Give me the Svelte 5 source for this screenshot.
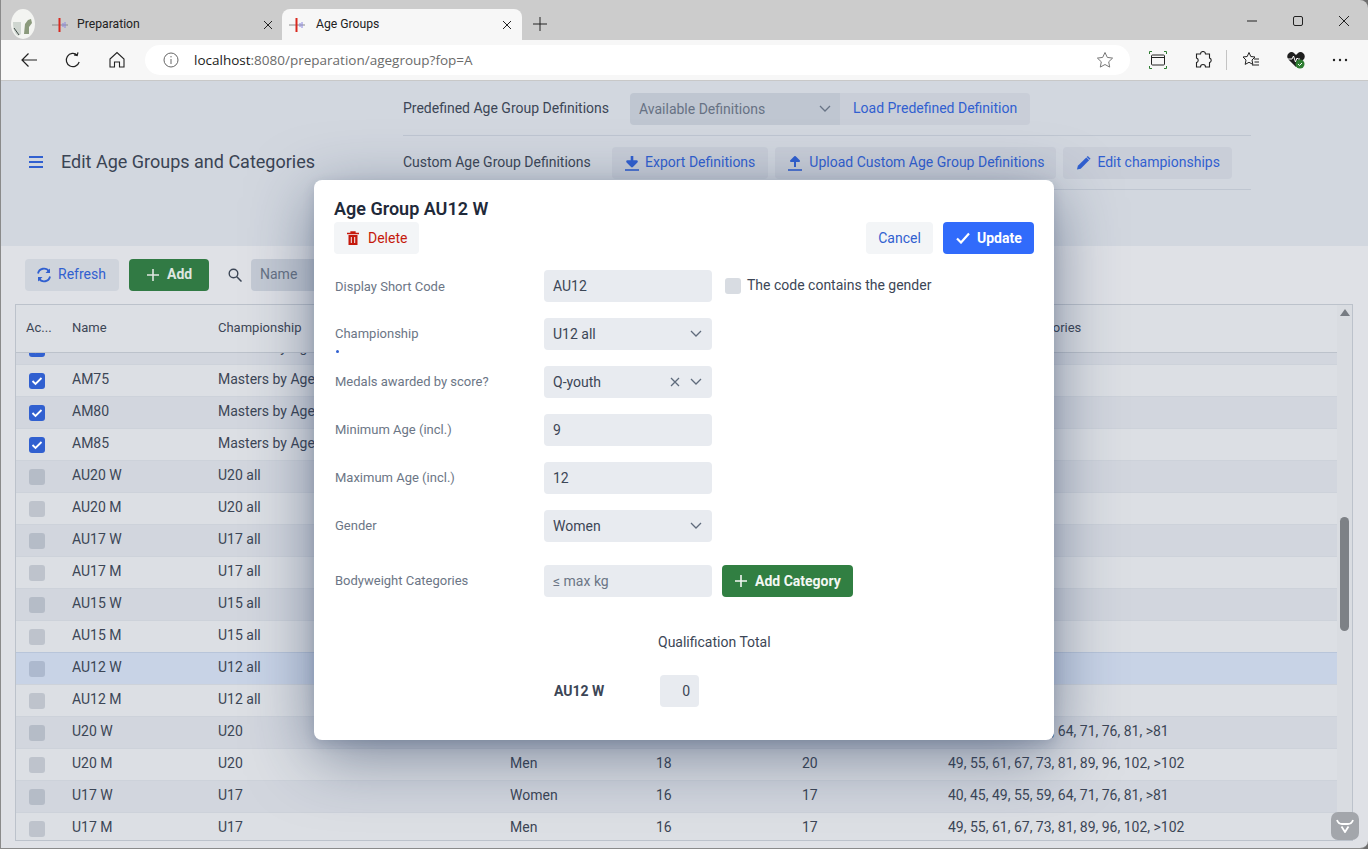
<script>
  const rows = [
    { name: 'AM70', champ: 'Masters by Age Group', gender: 'Men', min: 70, max: 74, cats: '', on: true },
    { name: 'AM75', champ: 'Masters by Age Group', gender: 'Men', min: 75, max: 79, cats: '', on: true },
    { name: 'AM80', champ: 'Masters by Age Group', gender: 'Men', min: 80, max: 84, cats: '', on: true },
    { name: 'AM85', champ: 'Masters by Age Group', gender: 'Men', min: 85, max: 89, cats: '', on: true },
    { name: 'AU20 W', champ: 'U20 all', gender: 'Women', min: 18, max: 20, cats: '' },
    { name: 'AU20 M', champ: 'U20 all', gender: 'Men', min: 18, max: 20, cats: '' },
    { name: 'AU17 W', champ: 'U17 all', gender: 'Women', min: 16, max: 17, cats: '' },
    { name: 'AU17 M', champ: 'U17 all', gender: 'Men', min: 16, max: 17, cats: '' },
    { name: 'AU15 W', champ: 'U15 all', gender: 'Women', min: 13, max: 15, cats: '' },
    { name: 'AU15 M', champ: 'U15 all', gender: 'Men', min: 13, max: 15, cats: '' },
    { name: 'AU12 W', champ: 'U12 all', gender: 'Women', min: 9, max: 12, cats: '', selected: true },
    { name: 'AU12 M', champ: 'U12 all', gender: 'Men', min: 9, max: 12, cats: '' },
    { name: 'U20 W', champ: 'U20', gender: 'Women', min: 18, max: 20, cats: '40, 45, 49, 55, 59, 64, 71, 76, 81, >81' },
    { name: 'U20 M', champ: 'U20', gender: 'Men', min: 18, max: 20, cats: '49, 55, 61, 67, 73, 81, 89, 96, 102, >102' },
    { name: 'U17 W', champ: 'U17', gender: 'Women', min: 16, max: 17, cats: '40, 45, 49, 55, 59, 64, 71, 76, 81, >81' },
    { name: 'U17 M', champ: 'U17', gender: 'Men', min: 16, max: 17, cats: '49, 55, 61, 67, 73, 81, 89, 96, 102, >102' },
  ];

  const fields = [
    { label: 'Championship', value: 'U12 all', select: true, dot: true },
    { label: 'Medals awarded by score?', value: 'Q-youth', select: true, clear: true },
    { label: 'Minimum Age (incl.)', value: '9' },
    { label: 'Maximum Age (incl.)', value: '12' },
    { label: 'Gender', value: 'Women', select: true },
  ];
</script>

<div class="window">
  <div class="tabstrip">
    <svg class="avatar" viewBox="0 0 24 32" width="24" height="32">
      <ellipse cx="12" cy="16" rx="12" ry="15" fill="#f3f4f1" />
      <path d="M2 14c0 6 1 11 5 14l3-2V14z" fill="#cfd6d0" />
      <path d="M13 26l1-10 3-4 3-1 1 4-3 4v7z" fill="#8b9a7c" />
      <path d="M3 20l5 7" stroke="#3f4a46" stroke-width="1" fill="none" />
    </svg>
    <div class="tab">
      <svg class="favicon" viewBox="0 0 16 16" width="16" height="16">
        <path d="M0 8h16" stroke="#8a8a8a" />
        <path d="M11 6v4M13 5v6" stroke="#8a86e0" />
        <path d="M7.5 1v14" stroke="#d9281e" stroke-width="2" />
      </svg>
      <span class="tab-title">Preparation</span>
      <svg class="tab-close" viewBox="0 0 10 10" width="10" height="10"><path d="M1 1l8 8M9 1l-8 8" stroke="#222" fill="none" /></svg>
    </div>
    <div class="tab active">
      <svg class="favicon" viewBox="0 0 16 16" width="16" height="16">
        <path d="M0 8h16" stroke="#8a8a8a" />
        <path d="M11 6v4M13 5v6" stroke="#8a86e0" />
        <path d="M7.5 1v14" stroke="#d9281e" stroke-width="2" />
      </svg>
      <span class="tab-title">Age Groups</span>
      <svg class="tab-close" viewBox="0 0 10 10" width="10" height="10"><path d="M1 1l8 8M9 1l-8 8" stroke="#222" fill="none" /></svg>
    </div>
    <svg class="newtab" viewBox="0 0 14 14" width="14" height="14"><path d="M7 0v14M0 7h14" stroke="#222" fill="none" /></svg>
    <div class="winctl">
      <svg viewBox="0 0 10 10" width="10" height="10"><path d="M0 5h10" stroke="#222" /></svg>
      <svg viewBox="0 0 10 10" width="10" height="10"><rect x=".5" y=".5" width="9" height="9" rx="1.5" stroke="#222" fill="none" /></svg>
      <svg viewBox="0 0 10 10" width="10" height="10"><path d="M0 0l10 10M10 0L0 10" stroke="#222" fill="none" /></svg>
    </div>
  </div>

  <div class="toolbar">
    <svg class="tool-first" viewBox="0 0 18 18" width="18" height="18"><path d="M17 9H2M8.5 2.5L2 9l6.5 6.5" stroke="#222" stroke-width="1.2" fill="none" /></svg>
    <svg viewBox="0 0 18 18" width="18" height="18"><path d="M15.5 9.5A6.6 6.6 0 1 1 12 3.2M12 .5v3.2H8.8" stroke="#222" stroke-width="1.2" fill="none" transform="rotate(14 9 9)" /></svg>
    <svg viewBox="0 0 18 18" width="18" height="18"><path d="M2 8l7-6.5L16 8v8h-4.500v-5h-5v5H2z" stroke="#222" stroke-width="1.1" fill="none" /></svg>
    <div class="address">
      <svg viewBox="0 0 16 16" width="16" height="16"><circle cx="8" cy="8" r="7" stroke="#666" fill="none" /><path d="M8 7v5M8 4v1.4" stroke="#666" fill="none" /></svg>
      <span class="url"><b>localhost</b>:8080/preparation/agegroup?fop=A</span>
      <svg class="star" viewBox="0 0 18 18" width="18" height="18"><path d="M9 1.5l2.3 4.9 5.3.7-3.9 3.7 1 5.3L9 13.5l-4.7 2.6 1-5.3-3.9-3.7 5.3-.7z" stroke="#777" fill="none" /></svg>
    </div>
    <div class="tool-icons">
      <svg viewBox="0 0 18 18" width="18" height="18">
        <rect x="2.5" y="4" width="13" height="10" rx="1" stroke="#222" fill="none" /><path d="M2.5 6.5h13" stroke="#222" />
        <path d="M.5 3V.5H3M15 .5h2.5V3M.5 15v2.5H3M15 17.5h2.5V15" stroke="#2e7d32" fill="none" />
      </svg>
      <svg viewBox="0 0 18 18" width="18" height="18"><path d="M6.5 3a2.5 2.5 0 0 1 5 0h4v4a2.4 2.4 0 0 1 0 4.6V16h-4a2.5 2.5 0 0 0-5 0h-4v-4.4a2.4 2.4 0 0 0 0-4.6V3z" stroke="#222" stroke-width="1.1" fill="none" /></svg>
      <span class="divider"></span>
      <svg viewBox="0 0 18 18" width="18" height="18"><path d="M7 1.5l1.8 4 4.2.5-3 3 .8 4.4L7 11.300l-3.800 2.100.8-4.400-3-3 4.200-.5zM12 8h5M12.500 11h4.500M10 14h7" stroke="#222" fill="none" /></svg>
      <svg class="heart" viewBox="0 0 20 20" width="20" height="20">
        <path d="M10 17L2.500 9.500a4.200 4.200 0 0 1 0-6 4.300 4.300 0 0 1 6 0L10 5l1.500-1.500a4.300 4.300 0 0 1 6 0 4.200 4.200 0 0 1 0 6z" fill="#1e1e1e" />
        <path d="M1 9h5l1.500-3 2 6L11 8l1 1h2" stroke="#fff" fill="none" />
        <circle cx="14" cy="14" r="4.500" fill="#2e7d32" /><path d="M12 14l1.500 1.500 2.500-2.500" stroke="#fff" fill="none" />
      </svg>
      <svg class="dots" viewBox="0 0 16 4" width="16" height="4"><circle cx="2" cy="2" r="1.200" fill="#222" /><circle cx="8" cy="2" r="1.200" fill="#222" /><circle cx="14" cy="2" r="1.200" fill="#222" /></svg>
    </div>
  </div>

  <div class="page">
    <header class="page-head">
      <div class="title-area">
        <svg viewBox="0 0 14 12" width="14" height="12"><path d="M0 1h14M0 6h14M0 11h14" stroke="#3160d0" stroke-width="2" /></svg>
        <h1>Edit Age Groups and Categories</h1>
      </div>
      <div class="head-forms">
        <div class="head-row">
          <span class="head-label first">Predefined Age Group Definitions</span>
          <div class="combo">Available Definitions
            <svg viewBox="0 0 12 8" width="12" height="8"><path d="M1 1l5 5 5-5" stroke="#687486" stroke-width="1.300" fill="none" /></svg>
          </div>
          <button class="btn load"><span class="lift">Load Predefined Definition</span></button>
        </div>
        <div class="head-row">
          <span class="head-label second">Custom Age Group Definitions</span>
          <button class="btn head-btn export">
            <svg viewBox="0 0 14 16" width="14" height="16"><path d="M7 1v8M2.500 6.500L7 11l4.500-4.500z" stroke="#3160d0" stroke-width="2.600" stroke-linejoin="round" fill="#3160d0" /><path d="M0 15h14" stroke="#3160d0" stroke-width="1.600" /></svg>
            <span class="lift">Export Definitions</span>
          </button>
          <button class="btn head-btn wide-gap">
            <svg viewBox="0 0 14 16" width="14" height="16"><path d="M7 12V5M3 6l4-4 4 4z" stroke="#3160d0" stroke-width="2" stroke-linejoin="round" fill="#3160d0" /><path d="M0 15h14" stroke="#3160d0" stroke-width="1.600" /></svg>
            <span class="lift">Upload Custom Age Group Definitions</span>
          </button>
          <button class="btn head-btn">
            <svg viewBox="0 0 16 16" width="15" height="16"><path d="M1 15l1-4L11 2l3 3-9 9z" fill="#3160d0" /><path d="M12 1l3 3" stroke="#3160d0" stroke-width="1.600" /></svg>
            <span class="lift">Edit championships</span>
          </button>
        </div>
      </div>
    </header>

    <section class="content">
      <div class="grid-toolbar">
        <button class="btn refresh">
          <svg viewBox="0 0 16 16" width="16" height="16"><path d="M2 6.500A6 6 0 0 1 13 4.500M14 9.500A6 6 0 0 1 3 11.500" stroke="#3160d0" stroke-width="1.800" fill="none" /><path d="M14 1.500V6h-4.500zM2 14.500V10h4.500z" fill="#3160d0" /></svg>
          <span class="lift">Refresh</span>
        </button>
        <button class="btn add">
          <svg viewBox="0 0 12 12" width="12" height="12"><path d="M6 0v12M0 6h12" stroke="currentColor" stroke-width="1.600" /></svg>
          <span class="lift">Add</span>
        </button>
        <svg class="search" viewBox="0 0 14 14" width="14" height="14"><circle cx="5.500" cy="5.500" r="4.300" stroke="#3c4656" stroke-width="1.400" fill="none" /><path d="M8.800 8.800L13.500 13.500" stroke="#3c4656" stroke-width="1.500" /></svg>
        <div class="filter"><span class="lift">Name</span></div>
      </div>

      <div class="table">
        <div class="table-main">
          <div class="row head">
            <span class="ac">Ac...</span>
            <span>Name</span>
            <span>Championship</span>
            <span>Gender</span>
            <span>Minimum Age</span>
            <span>Maximum Age</span>
            <span>Bodyweight Categories</span>
          </div>
          <div class="body">
            {#each rows as r, i}
              <div class="row" class:alt={i % 2 === 0} class:selected={r.selected}>
                <span class="ac"><span class="check" class:on={r.on}>
                  {#if r.on}
                    <svg viewBox="0 0 16 16" width="16" height="16"><path d="M3.500 8l3 3 6-6" stroke="#fff" stroke-width="1.800" fill="none" /></svg>
                  {/if}
                </span></span>
                <span>{r.name}</span>
                <span>{r.champ}</span>
                <span>{r.gender}</span>
                <span>{r.min}</span>
                <span>{r.max}</span>
                <span>{r.cats}</span>
              </div>
            {/each}
          </div>
        </div>
        <div class="scrollbar">
          <span class="arrow"></span>
          <span class="thumb"></span>
        </div>
      </div>
    </section>

    <div class="devtools">
      <svg viewBox="0 0 18 14" width="18" height="14"><path d="M1 1c1 3 3 4 5 4h6c2 0 4-1 5-4" stroke="#fff" stroke-width="1.800" fill="none" /><path d="M5.500 7.500L9 13l3.500-5.500" stroke="#fff" stroke-width="1.800" fill="none" /></svg>
    </div>
  </div>

  <div class="dialog">
    <h2>Age Group AU12 W</h2>
    <div class="dialog-actions">
      <button class="btn delete">
        <svg viewBox="0 0 12 14" width="12" height="14"><path d="M0 2.500h12M4 2.500V1h4v1.500" stroke="#c5190c" stroke-width="1.300" fill="none" /><path d="M1.500 4h9v10h-9z" fill="#c5190c" /><path d="M4.300 6v6M7.700 6v6" stroke="#f3f5f7" /></svg>
        Delete
      </button>
      <button class="btn cancel">Cancel</button>
      <button class="btn update">
        <svg viewBox="0 0 14 12" width="14" height="12"><path d="M1 6.500L5 10.500 13 1.500" stroke="#fff" stroke-width="2.200" fill="none" /></svg>
        Update
      </button>
    </div>

    <div class="form">
      <div class="form-row">
        <span class="form-label">Display Short Code</span>
        <div class="field">AU12</div>
        <span class="box"></span>
        <span class="box-label">The code contains the gender</span>
      </div>
      {#each fields as f}
        <div class="form-row">
          <span class="form-label raised">
            {f.label}
            {#if f.dot}<i class="dot"></i>{/if}
          </span>
          <div class="field">
            {f.value}
            <span class="field-icons">
              {#if f.clear}
                <svg viewBox="0 0 10 10" width="10" height="10"><path d="M1 1l8 8M9 1l-8 8" stroke="#5f6b7c" stroke-width="1.300" fill="none" /></svg>
              {/if}
              {#if f.select}
                <svg viewBox="0 0 12 8" width="12" height="8"><path d="M1 1l5 5 5-5" stroke="#5f6b7c" stroke-width="1.300" fill="none" /></svg>
              {/if}
            </span>
          </div>
        </div>
      {/each}
      <div class="form-row weight">
        <span class="form-label raised">Bodyweight Categories</span>
        <div class="field placeholder">≤ max kg</div>
        <button class="btn add-cat">
          <svg viewBox="0 0 12 12" width="12" height="12"><path d="M6 0v12M0 6h12" stroke="currentColor" stroke-width="1.600" /></svg>
          Add Category
        </button>
      </div>
    </div>

    <div class="qual">
      <div class="qual-head">Qualification Total</div>
      <div class="qual-row">
        <b>AU12 W</b>
        <span class="qual-value">0</span>
      </div>
    </div>
  </div>
</div>

<style>
  :global(body) {
    margin: 0;
    background: #6e6e6e;
  }

  .window {
    position: relative;
    width: 1368px;
    height: 849px;
    box-sizing: border-box;
    overflow: hidden;
    border-left: 1px solid #8a8a8a;
    border-bottom: 1px solid #8a8a8a;
    border-radius: 0 8px 8px 0;
    font-family: Roboto, sans-serif;
    font-size: 14px;
    color: #3c4656;
  }

  /* browser chrome */
  .tabstrip {
    height: 40px;
    background: #cccccc;
    display: flex;
    align-items: flex-end;
    font-family: Roboto, sans-serif;
    font-size: 12.2px;
    color: #222;
  }

  .avatar {
    margin: 0 0 0 10px;
    align-self: center;
    flex: none;
    position: relative;
    top: 4px;
  }

  .tab {
    width: 240px;
    height: 31px;
    box-sizing: border-box;
    display: flex;
    align-items: center;
    padding: 0 10px 0 9px;
    margin-left: 8px;
    flex: none;
  }

  .tab.active {
    background: #f7f7f7;
    border-radius: 8px 8px 0 0;
    padding-left: 7px;
    margin-left: -1px;
  }

  .tab-title {
    margin-left: 9px;
    flex: 1;
    position: relative;
    top: -1px;
  }

  .tab.active .tab-title {
    margin-left: 11px;
  }

  .newtab {
    margin: 0 0 9px 11px;
  }

  .winctl {
    margin-left: auto;
    display: flex;
    gap: 36px;
    padding-right: 19px;
    align-self: center;
    margin-top: 2px;
  }

  .toolbar {
    height: 41px;
    box-sizing: border-box;
    background: #f7f7f7;
    border-bottom: 1px solid #c8c8c8;
    display: flex;
    align-items: center;
    gap: 26px;
    padding-bottom: 1px;
  }

  .tool-first {
    margin-left: 19px;
  }

  .address {
    width: 985px;
    height: 30px;
    background: #fff;
    border-radius: 15px;
    display: flex;
    align-items: center;
    padding: 0 16px 0 18px;
    box-sizing: border-box;
    margin-left: -7px;
    flex: none;
  }

  .url {
    margin-left: 15px;
    font-family: "Open Sans", sans-serif;
    font-size: 13.5px;
    color: #6b6b6b;
    flex: 1;
  }

  .url b {
    font-weight: 400;
    color: #1a1a1a;
  }

  .tool-icons {
    display: flex;
    align-items: center;
    margin-left: -7px;
    gap: 27px;
  }

  .divider {
    width: 1px;
    height: 20px;
    background: #c4c4c4;
    margin: 0 -12px 0 -13px;
  }

  .heart,
  .dots {
    margin-left: -1px;
  }

  /* dimmed application page */
  .page {
    position: relative;
    height: 767px;
    background: #dfe1e6;
  }

  .page-head {
    height: 165px;
    box-sizing: border-box;
    background: #d2d7df;
    display: flex;
    padding-top: 12px;
  }

  .title-area {
    width: 402px;
    display: flex;
    align-items: center;
    gap: 18px;
    padding: 0 0 16px 28px;
    box-sizing: border-box;
    flex: none;
  }

  h1 {
    margin: 0;
    font-size: 18px;
    font-weight: 400;
    color: #3a4454;
  }

  .head-forms {
    width: 848px;
  }

  .head-row {
    display: flex;
    align-items: center;
    height: 43px;
    padding-bottom: 10px;
    box-sizing: border-box;
    border-bottom: 1px solid #bfc6d1;
  }

  .head-row + .head-row {
    padding-top: 11px;
    height: 54px;
  }

  .head-label {
    flex: none;
    position: relative;
    top: -1px;
  }

  .head-label.first {
    width: 227px;
  }

  .head-label.second {
    width: 209px;
  }

  .combo {
    width: 210px;
    height: 32px;
    box-sizing: border-box;
    background: #bfc6d1;
    border-radius: 4px 0 0 4px;
    color: #677284;
    display: flex;
    align-items: center;
    justify-content: space-between;
    padding: 0 9px;
  }

  .btn {
    height: 32px;
    border: 0;
    border-radius: 4px;
    background: #c9ced8;
    color: #3160d0;
    font: inherit;
    display: inline-flex;
    align-items: center;
    gap: 7px;
    padding: 0 13px;
    margin: 0 7px 0 0;
    flex: none;
  }

  .load {
    border-radius: 0 4px 4px 0;
    margin: 0;
  }

  .head-btn {
    gap: 6px;
    padding: 0 12px 0 13px;
  }

  .head-btn.export {
    padding-right: 13px;
  }

  .head-btn.wide-gap {
    gap: 7px;
  }

  .content {
    padding: 13px 15px 0 14px;
  }

  .grid-toolbar {
    display: flex;
    align-items: center;
    padding-left: 10px;
    height: 32px;
    margin-bottom: 13px;
  }

  .lift {
    position: relative;
    top: -1px;
  }

  .btn.refresh {
    width: 94px;
    padding: 0 0 0 11px;
    gap: 6px;
    margin-right: 10px;
    background: #cfd4dc;
  }

  .btn.add {
    width: 80px;
    padding: 0 0 0 18px;
    gap: 8px;
    margin: 0;
    background: #317a44;
    color: #dfe6e0;
    font-weight: 700;
  }

  .search {
    margin: 0 9px 0 19px;
  }

  .filter {
    width: 120px;
    height: 32px;
    background: #c4cad4;
    border-radius: 4px;
    display: flex;
    align-items: center;
    padding-left: 9px;
    color: #677284;
  }

  .table {
    height: 537px;
    box-sizing: border-box;
    border: 1px solid #bcc2cb;
    display: flex;
    overflow: hidden;
    background: #dcdfe4;
  }

  .table-main {
    width: 1321px;
    flex: none;
  }

  .row {
    display: grid;
    grid-template-columns: 46px 146px 292px 146px 146px 146px 1fr;
    height: 32px;
    box-sizing: border-box;
    align-items: center;
    border-top: 1px solid #cdd2da;
    background: #dcdfe4;
  }

  .row > span {
    padding-left: 10px;
    padding-bottom: 3px;
    white-space: nowrap;
    overflow: hidden;
  }

  .row.alt {
    background: #d2d6de;
  }

  .row.selected {
    background: #c8d3e6;
    border-top-color: #b8c5da;
  }

  .row.head {
    height: 48px;
    border-top: 0;
    border-bottom: 1px solid #bcc2cb;
    background: #dcdfe4;
    font-size: 13px;
  }

  .row.head > span {
    padding-bottom: 2px;
  }

  .body {
    height: 488px;
    overflow: hidden;
  }

  .body .row:first-child {
    margin-top: -21px;
  }

  .body .row > .ac {
    padding: 0 0 0 13px;
    display: flex;
  }

  .check {
    width: 16px;
    height: 16px;
    border-radius: 3px;
    background: rgba(40, 60, 90, 0.17);
    display: block;
  }

  .check.on {
    background: #3160d0;
  }

  .check svg {
    display: block;
  }

  .scrollbar {
    position: relative;
    flex: 1;
    background: #d9dce1;
  }

  .arrow {
    position: absolute;
    left: 3px;
    top: 4px;
    border: 5px solid transparent;
    border-top: 0;
    border-bottom: 7px solid #777c83;
  }

  .thumb {
    position: absolute;
    left: 3px;
    top: 212px;
    width: 9px;
    height: 114px;
    border-radius: 5px;
    background: #7d8186;
  }

  .devtools {
    position: absolute;
    left: 1330px;
    top: 731px;
    width: 28px;
    height: 28px;
    border-radius: 7px;
    background: #a3a6ab;
    display: flex;
    align-items: center;
    justify-content: center;
  }

  /* modal */
  .dialog {
    position: absolute;
    left: 313px;
    top: 180px;
    width: 740px;
    height: 560px;
    box-sizing: border-box;
    background: #fff;
    border-radius: 8px;
    box-shadow: 0 4px 12px rgba(30, 50, 85, 0.15), 0 16px 64px rgba(30, 50, 85, 0.5);
    padding: 20px;
  }

  h2 {
    margin: 0;
    font-size: 18px;
    line-height: 22px;
    font-weight: 600;
    color: #1f2a3a;
    height: 22px;
    margin-top: -2px;
  }

  .dialog-actions {
    display: flex;
    align-items: center;
    margin-top: 2px;
  }

  .btn.delete {
    width: 85px;
    padding: 0 0 0 13px;
    gap: 9px;
    margin: 0 auto 0 0;
    background: #f3f5f7;
    color: #c5190c;
  }

  .btn.cancel {
    width: 67px;
    padding: 0;
    justify-content: center;
    margin-right: 10px;
    background: #f3f5f7;
    color: #3160d0;
  }

  .btn.update {
    width: 91px;
    padding: 0 0 0 13px;
    margin: 0;
    background: #316bfb;
    color: #fff;
    font-weight: 700;
  }

  .form {
    margin-top: 16px;
  }

  .form-row {
    display: flex;
    align-items: center;
    height: 32px;
    margin-bottom: 16px;
  }

  .form-label {
    width: 210px;
    padding-left: 1px;
    box-sizing: border-box;
    font-size: 13px;
    color: #6c7686;
    position: relative;
    flex: none;
  }

  .form-label.raised {
    top: -1px;
  }

  .dot {
    position: absolute;
    left: 2px;
    top: 24px;
    width: 3px;
    height: 3px;
    border-radius: 50%;
    background: #3160d0;
  }

  .field {
    width: 168px;
    height: 32px;
    box-sizing: border-box;
    background: #e8ebf0;
    border-radius: 4px;
    display: flex;
    align-items: center;
    padding: 0 9px;
    flex: none;
  }

  .field-icons {
    margin-left: auto;
    display: flex;
    align-items: center;
    gap: 10px;
    padding-right: 1px;
  }

  .box {
    width: 16px;
    height: 16px;
    border-radius: 3px;
    background: #d8dce2;
    margin-left: 13px;
    flex: none;
  }

  .box-label {
    margin-left: 6px;
    position: relative;
    top: -1px;
  }

  .form-row.weight {
    margin-top: 23px;
  }

  .placeholder {
    color: #6c7686;
  }

  .btn.add-cat {
    width: 131px;
    padding: 0 0 0 13px;
    gap: 8px;
    margin: 0 0 0 10px;
    background: #317f42;
    color: #f3f7f3;
    font-weight: 700;
  }

  .qual {
    padding-left: 220px;
    margin-top: 36px;
  }

  .qual-head {
    padding-left: 104px;
    line-height: 18px;
  }

  .qual-row {
    display: flex;
    align-items: center;
    margin-top: 24px;
    height: 32px;
  }

  .qual-row b {
    width: 106px;
    font-weight: 700;
  }

  .qual-value {
    width: 39px;
    height: 32px;
    box-sizing: border-box;
    background: #e8ebf0;
    border-radius: 4px;
    display: flex;
    align-items: center;
    justify-content: flex-end;
    padding-right: 9px;
  }
</style>
